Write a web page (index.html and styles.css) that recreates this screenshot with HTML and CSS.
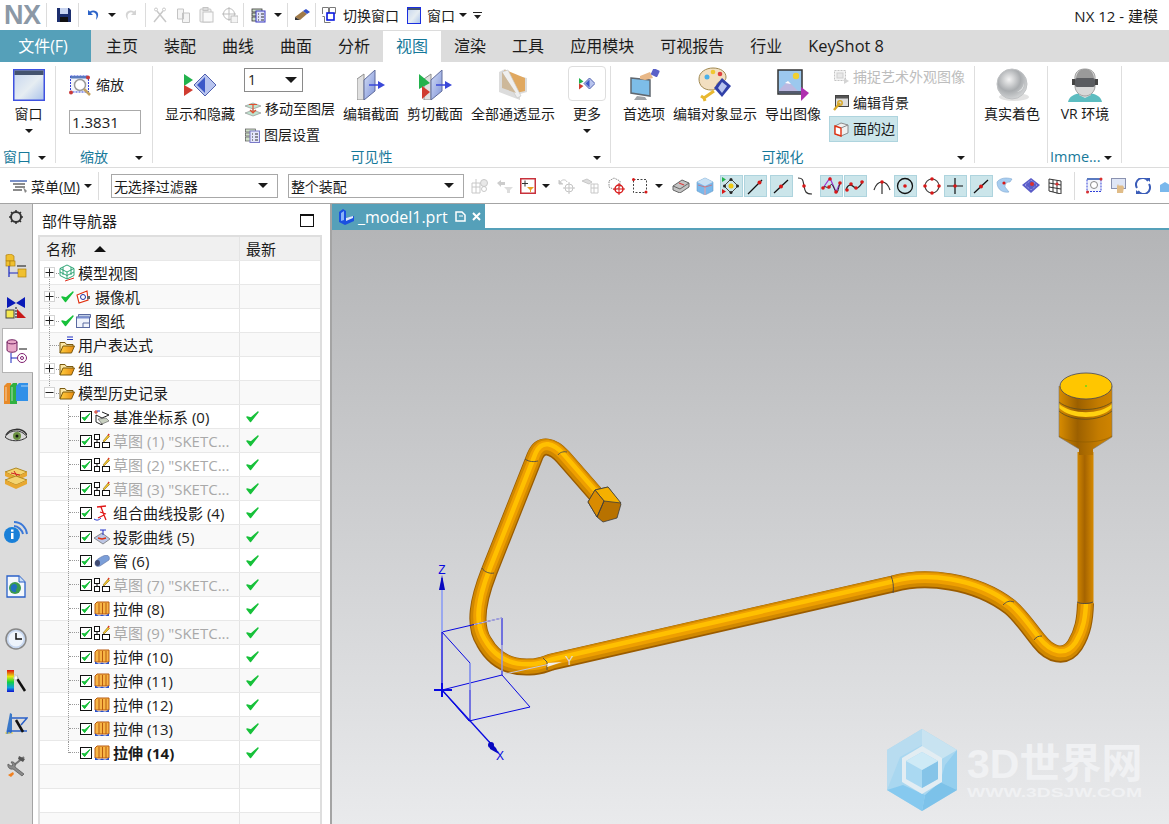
FILE: index.html
```html
<!DOCTYPE html>
<html lang="zh-CN">
<head>
<meta charset="utf-8">
<title>NX 12 - 建模</title>
<link rel="stylesheet" href="styles.css">
</head>
<body>
<svg class="defs" width="0" height="0">
  <defs>
    <linearGradient id="gWin" x1="0" y1="0" x2="1" y2="1"><stop offset="0" stop-color="#c4d4ee"/><stop offset=".55" stop-color="#e6edf2"/><stop offset="1" stop-color="#a9c2ea"/></linearGradient>
    <linearGradient id="gBlue" x1="0" y1="0" x2="1" y2="1"><stop offset="0" stop-color="#d4def6"/><stop offset="1" stop-color="#7f93d8"/></linearGradient>
    <linearGradient id="gOr" x1="0" y1="0" x2="1" y2="0"><stop offset="0" stop-color="#ffcf40"/><stop offset="1" stop-color="#e88a10"/></linearGradient>
    <radialGradient id="gBall" cx=".4" cy=".35" r=".7"><stop offset="0" stop-color="#f4f4f4"/><stop offset=".55" stop-color="#a9acaf"/><stop offset="1" stop-color="#d7d9da"/></radialGradient>
    <linearGradient id="gRain" x1="0" y1="0" x2="0" y2="1"><stop offset="0" stop-color="#e01010"/><stop offset=".3" stop-color="#e8e810"/><stop offset=".55" stop-color="#10d040"/><stop offset=".8" stop-color="#10a0e0"/><stop offset="1" stop-color="#1010d0"/></linearGradient>
    <symbol id="caret" viewBox="0 0 8 4"><polygon points="0,0 8,0 4,4" fill="#1a1a1a"/></symbol>
    <symbol id="chk" viewBox="0 0 13 13"><path d="M1 7l3.5 4.5L12 2 5 8z" fill="#17c13a" stroke="#17c13a" stroke-width="1.4" stroke-linejoin="round"/></symbol>
    <symbol id="cbx" viewBox="0 0 12 12"><rect x=".5" y=".5" width="11" height="11" fill="#fff" stroke="#111"/><path d="M2 6.5l2.6 3.2L10 2.5 4.8 6.8z" fill="#17c13a" stroke="#17c13a" stroke-linejoin="round"/></symbol>
    <symbol id="plus" viewBox="0 0 11 11"><rect x=".5" y=".5" width="10" height="10" fill="#fff" stroke="#d4d4d4"/><path d="M1.5 5.5h8M5.5 1.5v8" stroke="#222"/></symbol>
    <symbol id="minus" viewBox="0 0 11 11"><rect x=".5" y=".5" width="10" height="10" fill="#fff" stroke="#d4d4d4"/><path d="M1.5 5.5h8" stroke="#222"/></symbol>
    <symbol id="folder" viewBox="0 0 16 14"><path d="M1 13V2.5h5l1.5 2H14v2" fill="#fbe7a6" stroke="#7a5a10"/><path d="M1 13l3-7h11.5L12.5 13z" fill="url(#gOr)" stroke="#7a5a10"/></symbol>
    <symbol id="sketch" viewBox="0 0 16 16"><g fill="#fff" stroke="#111"><rect x=".5" y="1.500" width="5" height="5"/><rect x=".5" y="9.500" width="5" height="5"/><rect x="8.500" y="9.500" width="7" height="5"/></g><path d="M3 6.500v3" stroke="#111"/><path d="M9 8l5-6 1.500 1.500L10 9z" fill="#f2c52a" stroke="#8a6a10" stroke-width=".6"/><path d="M13.500 2l1-1.500 1.300 1.300-1 1z" fill="#e03020"/></symbol>
    <symbol id="extr" viewBox="0 0 16 16"><path d="M1 3l2-2h12v12H1z" fill="#f7b545" stroke="#b85a10"/><path d="M5 2v11M8.500 2v11M12 2v11" stroke="#b85a10"/><path d="M1 12.500C4 14.500 5 15.500 8 13.500 11 15.500 12 14.500 15 12.500V15H1z" fill="#2850c8"/></symbol>
    <symbol id="pt-line" viewBox="0 0 20 20"><path d="M3 18L17 4" stroke="#111" stroke-width="1.300"/><circle cx="14.500" cy="6.500" r="2" fill="#d81818"/></symbol>
    <symbol id="pt-mid" viewBox="0 0 20 20"><path d="M3 17L17 4" stroke="#111" stroke-width="1.300"/><circle cx="10" cy="10.500" r="2" fill="#d81818"/></symbol>
  </defs>
</svg>

<div class="app">
  <header class="titlebar">
    <span class="logo">NX</span>
    <i class="vsep"></i>
    <span class="slot w14 ml10"><svg width="14" height="14" viewBox="0 0 14 14"><path d="M0 0h12l2 2v12H0z" fill="#1c2f6e"/><rect x="3" y="0" width="8" height="6" fill="#c8d4f0"/><rect x="3" y="9" width="8" height="5" fill="#111"/></svg></span>
    <i class="vsep ml7"></i>
    <span class="slot w12 ml8"><svg width="12" height="12" viewBox="0 0 12 12"><path d="M1 1v5h5L4 4c2-1.500 5-.5 5.500 3L9 11c2.500-3 3-6.500.5-8.500C7.500 1 5 1 3 2.500z" fill="#2c63c8"/></svg></span>
    <span class="slot w8 ml9"><svg width="8" height="4"><use href="#caret"/></svg></span>
    <span class="slot w12 ml9"><svg width="12" height="12" viewBox="0 0 12 12"><path d="M11 1v5H6l2-2C6 2.500 3 3.500 2.500 7L3 11C.5 8 0 4.500 2.500 2.500 4.500 1 7 1 9 2.500z" fill="#d4d4d4"/></svg></span>
    <i class="vsep ml8"></i>
    <span class="slot w14 ml7"><svg width="14" height="16" viewBox="0 0 14 16"><path d="M1 15L10 4M13 15L4 4" stroke="#c8c8c8" stroke-width="1.500" fill="none"/><circle cx="11" cy="2.500" r="1.500" fill="none" stroke="#c8c8c8"/><circle cx="3" cy="2.500" r="1.500" fill="none" stroke="#c8c8c8"/></svg></span>
    <span class="slot w13 ml10"><svg width="13" height="15" viewBox="0 0 13 15"><path d="M.5 1h6v10h-6zM5.500 5h7v9.500h-7z" fill="#f4f4f4" stroke="#c4c4c4"/></svg></span>
    <span class="slot w15 ml9"><svg width="15" height="16" viewBox="0 0 15 16"><rect x="1" y="2" width="11" height="13" rx="1" fill="#f0f0f0" stroke="#c4c4c4"/><rect x="4" y="5" width="10" height="10" fill="#fafafa" stroke="#c4c4c4"/><rect x="4" y="0.500" width="5" height="3" fill="#ddd" stroke="#c4c4c4"/></svg></span>
    <span class="slot w16 ml8"><svg width="16" height="16" viewBox="0 0 16 16"><circle cx="7" cy="7" r="5.500" fill="none" stroke="#bdbdbd"/><path d="M7 0v14M0 7h14" stroke="#bdbdbd"/><rect x="9" y="9" width="7" height="7" fill="#f4f4f4" stroke="#bdbdbd"/></svg></span>
    <i class="vsep ml5"></i>
    <span class="slot w15 ml7"><svg width="15" height="16" viewBox="0 0 15 16"><g fill="#cfe0c8" stroke="#333" stroke-width=".8"><rect x="1" y="2" width="10" height="3"/><rect x="1" y="6" width="10" height="3"/><rect x="1" y="10" width="10" height="4"/></g><rect x="5" y="4" width="9" height="11" fill="#dfe2fa" stroke="#3a3ac0"/><path d="M7 7h1M7 10h1M7 13h1M10 7h3M10 10h3M10 13h3" stroke="#333"/></svg></span>
    <span class="slot w8 ml8"><svg width="8" height="4"><use href="#caret"/></svg></span>
    <i class="vsep ml5"></i>
    <span class="slot w16 ml6"><svg width="16" height="12" viewBox="0 0 16 12"><path d="M1 8L9 2l4 3-7 6z" fill="#a07a48"/><path d="M9 2l3-2 4 3-3 2z" fill="#3450c8"/><path d="M1 8l5 3H1z" fill="#333"/></svg></span>
    <i class="vsep ml5"></i>
    <span class="slot w14 ml6"><svg width="14" height="16" viewBox="0 0 14 16"><path d="M.5 7V.5h6v6M7.500.5h6v6h-6zM.5 9.500h2v6h6" fill="none" stroke="#7a7a7a"/><rect x="5" y="6" width="7" height="7" fill="#fff" stroke="#0a1ae0" stroke-width="1.600"/></svg></span>
    <span class="ttext ml7">切换窗口</span>
    <span class="slot w14 ml8"><svg width="14" height="17" viewBox="0 0 14 17"><rect x=".5" y=".5" width="13" height="16" fill="url(#gWin)" stroke="#1a2ee0"/><rect x="1" y="1" width="12" height="2" fill="#44536e"/></svg></span>
    <span class="ttext ml6">窗口</span>
    <span class="slot w8 ml4"><svg width="8" height="4"><use href="#caret"/></svg></span>
    <span class="slot w10 ml5"><svg width="9" height="7" viewBox="0 0 9 7"><path d="M0 .5h9" stroke="#222"/><polygon points="1,3 8,3 4.500,7" fill="#222"/></svg></span>
    <span class="apptitle">NX 12 - 建模</span>
  </header>

  <nav class="tabs">
    <span class="tab-file">文件(F)</span>
    <span class="tab">主页</span><span class="tab">装配</span><span class="tab">曲线</span><span class="tab">曲面</span><span class="tab">分析</span><span class="tab tab-on">视图</span><span class="tab">渲染</span><span class="tab">工具</span><span class="tab">应用模块</span><span class="tab">可视报告</span><span class="tab">行业</span><span class="tab tab-latin">KeyShot 8</span>
  </nav>

  <section class="ribbon">
    <div class="group g1">
      <div class="g-body">
        <div class="big wfull">
          <span class="big-ic"><svg width="32" height="32" viewBox="0 0 32 32"><rect x=".75" y=".75" width="30.500" height="30.500" fill="url(#gWin)" stroke="#3f52e0" stroke-width="1.500"/><rect x="1.500" y="1.500" width="29" height="4.500" fill="#44536e"/></svg></span>
          <span class="big-t">窗口</span>
          <svg class="big-c" width="8" height="4"><use href="#caret"/></svg>
        </div>
      </div>
      <div class="g-label left">窗口<svg class="g-c" width="8" height="4"><use href="#caret"/></svg></div>
    </div>
    <div class="group g2">
      <div class="g-body col">
        <div class="zoomrow">
          <svg width="23" height="21" viewBox="0 0 23 21"><rect x="1.500" y="1" width="18" height="16" fill="#f4f6fb" stroke="#3040d8" stroke-dasharray="2 1"/><rect x="1.500" y="1" width="18" height="2.500" fill="#5a7ac0"/><circle cx="11" cy="10" r="5.500" fill="#fff" stroke="#9a9a9a" stroke-width="1.500"/><path d="M15 14l6 6" stroke="#c2a060" stroke-width="2.500"/><circle cx="19" cy="2.500" r="2" fill="#c83a3a"/><circle cx="2" cy="17.500" r="2" fill="#c83a3a"/></svg>
          <span>缩放</span>
        </div>
        <div class="zoomval">1.3831</div>
      </div>
      <div class="g-label">缩放<svg class="g-c" width="8" height="4"><use href="#caret"/></svg></div>
    </div>
    <div class="group g3">
      <div class="g-body">
        <div class="big w70 ml12">
          <span class="big-ic"><svg width="32" height="22" viewBox="0 0 32 22"><polygon points="0,0 9,6 0,12" fill="#22b24c"/><polygon points="0,11 9,16 0,22" fill="#d03c30"/><polygon points="21,0 32,11 21,22 10,11" fill="#b8c4ee" stroke="#5060b0"/><polygon points="21,3 21,19 13,11" fill="#3c58c8"/></svg></span>
          <span class="big-t">显示和隐藏</span>
        </div>
        <div class="lcol ml9">
          <div class="combo c-layer"><span>1</span><svg width="12" height="6"><use href="#caret"/></svg></div>
          <div class="mini mt7"><svg width="16" height="15" viewBox="0 0 16 15"><path d="M0 4l8-3 8 3-8 3z" fill="#bfe3cf" stroke="#888" stroke-width=".6"/><path d="M0 11l8-3 8 3-8 3z" fill="#bfe3cf" stroke="#888" stroke-width=".6"/><path d="M4 2.500h8M8 3v8M5 8l3 3 3-3" stroke="#e05030" fill="none" stroke-width="1.200"/></svg><span>移动至图层</span></div>
          <div class="mini mt6"><svg width="15" height="16" viewBox="0 0 15 16"><g fill="#cfe0c8" stroke="#555" stroke-width=".7"><rect x="0.500" y="2" width="10" height="3"/><rect x="0.500" y="6" width="10" height="3"/><rect x="0.500" y="10" width="10" height="4"/></g><rect x="5" y="4" width="9.500" height="11.500" fill="#e4e6fa" stroke="#7a7ac8"/><path d="M7 7h1M7 10h1M7 13h1M10 7h3M10 10h3M10 13h3" stroke="#333"/></svg><span>图层设置</span></div>
        </div>
        <div class="big w56">
          <span class="big-ic"><svg width="28" height="30" viewBox="0 0 28 30"><polygon points="0,9 7,4 7,30 0,30" fill="#e0e0e0" stroke="#909090"/><polygon points="7,10 18,0 18,21 7,30" fill="url(#gBlue)" stroke="#606c9c"/><path d="M12 15h10" stroke="#3a48d8" stroke-width="1.500"/><polygon points="21,11 28,15 21,19" fill="#3a48d8"/></svg></span>
          <span class="big-t">编辑截面</span>
        </div>
        <div class="big w56 ml8">
          <span class="big-ic"><svg width="33" height="30" viewBox="0 0 33 30"><polygon points="5,9 12,4 12,30 5,30" fill="#e0e0e0" stroke="#909090"/><polygon points="12,10 23,0 23,21 12,30" fill="url(#gBlue)" stroke="#606c9c"/><path d="M17 15h10" stroke="#3a48d8" stroke-width="1.500"/><polygon points="26,11 33,15 26,19" fill="#3a48d8"/><polygon points="0,4 11,13 0,19" fill="#22b24c"/><polygon points="3,16 11,22 3,29" fill="#d03c30"/></svg></span>
          <span class="big-t">剪切截面</span>
        </div>
        <div class="big w84 ml8">
          <span class="big-ic"><svg width="28" height="31" viewBox="0 0 28 31"><polygon points="0,3 6,0 14,6 28,9 28,23 21,25 21,31 0,23" fill="#dcdcdc"/><polygon points="5,1 9,2 26,9 26,22 17,24" fill="#e0a860"/><polygon points="3,3 9,1 22,27 18,29" fill="#efefef" stroke="#c4c4c4" stroke-width=".6"/><polygon points="3,3 17,24 3,19" fill="#cdb89a"/></svg></span>
          <span class="big-t">全部通透显示</span>
        </div>
        <div class="big w38 ml13">
          <span class="more-box"><svg width="16" height="15" viewBox="0 0 32 26"><polygon points="0,2 9,9 0,14" fill="#22b24c"/><polygon points="0,13 9,18 0,25" fill="#d03c30"/><polygon points="21,2 32,13 21,24 10,13" fill="#b8c4ee" stroke="#5060b0" stroke-width="2"/><polygon points="21,5 21,21 13,13" fill="#3c58c8"/></svg></span>
          <span class="big-t">更多</span>
          <svg class="big-c" width="8" height="4"><use href="#caret"/></svg>
        </div>
      </div>
      <div class="g-label">可见性<svg class="g-c" width="8" height="4"><use href="#caret"/></svg></div>
    </div>
    <div class="group g4">
      <div class="g-body">
        <div class="big w42 ml12">
          <span class="big-ic"><svg width="31" height="32" viewBox="0 0 31 32"><path d="M2 9l19 2v16l-19-3z" fill="#7dbde8" stroke="#606870" stroke-width="1.500"/><path d="M8 27l8 1 2 3H5z" fill="#a0a4a8"/><path d="M11 7l10-4 3 6-8 2-5-1z" fill="#e8b888"/><rect x="23" y="0" width="7" height="7" rx="1" transform="rotate(25 26 3)" fill="#5a60c8"/></svg></span>
          <span class="big-t">首选项</span>
        </div>
        <div class="big w84 ml8">
          <span class="big-ic"><svg width="34" height="36" viewBox="0 0 34 36"><path d="M1 12C1 5 8 1 15 1c8 0 13 4 13 9 0 4-3 5-6 5-2 0-3 1-3 3 0 4-2 5-6 5C6 23 1 19 1 12z" fill="#f2dfc0" stroke="#a08850"/><circle cx="9" cy="10" r="2.500" fill="#4ab0e8"/><circle cx="15" cy="5" r="2.300" fill="#f0c830"/><circle cx="22" cy="7" r="2.300" fill="#e04040"/><polygon points="24,11 33,19 24,30 16,21" fill="#3040a8"/><polygon points="24,15 29,19 24,26 20,21" fill="#b8c4ee"/><path d="M16 24L6 31M6 31l-3-2M6 31l1 3" stroke="#e8b830" stroke-width="3" fill="none"/></svg></span>
          <span class="big-t">编辑对象显示</span>
        </div>
        <div class="big w56 ml8">
          <span class="big-ic"><svg width="32" height="32" viewBox="0 0 32 32"><rect x="1" y="1" width="24" height="24" fill="#9cc8ee" stroke="#333" stroke-width="1.500"/><circle cx="19" cy="7" r="3.200" fill="#f0d030"/><path d="M2 21l9-9 12 12H2z" fill="#bcb8e0"/><path d="M8 14l3-2 3 3z" fill="#fff"/><rect x="2" y="22" width="22" height="2" fill="#555a70"/><polygon points="24,18 32,24 24,32" fill="#b030b0"/></svg></span>
          <span class="big-t">导出图像</span>
        </div>
        <div class="lcol2 ml8">
          <div class="mini2 dim"><svg width="16" height="16" viewBox="0 0 16 16"><rect x="1.500" y="1.500" width="11" height="10" fill="#f4f4f4" stroke="#c4c4c4" stroke-dasharray="2 1"/><rect x="4" y="4" width="6" height="5" fill="#e8e8e8" stroke="#d0d0d0"/><polygon points="11,9 16,12 11,15" fill="#d4d4d4"/></svg><span>捕捉艺术外观图像</span></div>
          <div class="mini2 mt6"><svg width="16" height="16" viewBox="0 0 16 16"><rect x="2.500" y=".5" width="13" height="11" fill="#ddd" stroke="#444"/><rect x="3" y="1" width="12" height="2.500" fill="#555"/><path d="M1 15l6-7" stroke="#d8a828" stroke-width="2.400"/><circle cx="7" cy="8" r="2.200" fill="none" stroke="#d8a828" stroke-width="1.500"/></svg><span>编辑背景</span></div>
          <div class="mini2 hl"><svg width="15" height="15" viewBox="0 0 15 15"><path d="M1 4l6-3 7 2v8l-7 3-6-2z" fill="#f0f0f0" stroke="#8a8a8a"/><path d="M1 4l6 2v8l-6-2z" fill="#fff" stroke="#e03010" stroke-width="1.400"/><path d="M7 6l7-3" stroke="#8a8a8a"/></svg><span>面的边</span></div>
        </div>
      </div>
      <div class="g-label">可视化<svg class="g-c" width="8" height="4"><use href="#caret"/></svg></div>
    </div>
    <div class="group g5">
      <div class="g-body">
        <div class="big w56 ml9">
          <span class="big-ic"><svg width="35" height="34" viewBox="0 0 35 34"><ellipse cx="19" cy="29" rx="15" ry="4" fill="#e2e2e2"/><circle cx="17" cy="16" r="15" fill="url(#gBall)" stroke="#c0c2c4"/><path d="M22 24c5-1 7-5 7-9-1 5-3 7-7 9z" fill="#fff" opacity=".8"/></svg></span>
          <span class="big-t">真实着色</span>
        </div>
      </div>
      <div class="g-label"></div>
    </div>
    <div class="group g6">
      <div class="g-body">
        <div class="big w50 ml12">
          <span class="big-ic"><svg width="34" height="34" viewBox="0 0 34 34"><path d="M0 34c1-6 7-8 12-9h10c5 1 11 3 12 9z" fill="#5cbcc0"/><path d="M11 20h12v7l-6 3-6-3z" fill="#e0e0e0"/><path d="M7 12C6 4 11 1 17 1s11 3 10 11v6c0 6-5 10-10 10S7 24 7 18z" fill="#d8d8d8" stroke="#a0a0a0"/><path d="M8 10C9 3 13 1 17 1s8 2 9 9z" fill="#9a9a9a"/><rect x="7" y="10" width="20" height="9" rx="2" fill="#5a5c60"/><rect x="4" y="11" width="3" height="6" fill="#444"/><rect x="27" y="11" width="3" height="6" fill="#444"/></svg></span>
          <span class="big-t">VR 环境</span>
        </div>
      </div>
      <div class="g-label left2">Imme...<svg class="g-c" width="8" height="4"><use href="#caret"/></svg></div>
    </div>
  </section>

  <section class="toolbar">
    <svg class="ml10" width="18" height="14" viewBox="0 0 18 14"><path d="M0 1h17v2H0z" fill="#7a90c8"/><path d="M3 5h12M5 8h10M3 11h9" stroke="#666" stroke-width="1.500"/><path d="M13 8l4 4-2 2z" fill="#888"/></svg>
    <span class="menu ml3">菜单(<u>M</u>)</span>
    <svg class="ml4" width="8" height="4"><use href="#caret"/></svg>
    <i class="tsep ml6"></i>
    <div class="combo c-f1 ml12"><span>无选择过滤器</span><svg width="10" height="5"><use href="#caret"/></svg></div>
    <div class="combo c-f2 ml10"><span>整个装配</span><svg width="10" height="5"><use href="#caret"/></svg></div>
    <span class="ts ml4"><svg width="18" height="16" viewBox="0 0 18 16" fill="none" stroke="#c8c8c8"><path d="M1 5h8v10H1zM5 1v14M1 9h8"/><circle cx="13" cy="5" r="3.500" fill="#e8e8e8"/><circle cx="13" cy="11" r="2.500"/></svg></span>
    <span class="ts ml1"><svg width="18" height="16" viewBox="0 0 18 16"><path d="M1 5l4-3v2h4v3H5v2z" fill="#ccc"/><path d="M8 9h9l-3 3v3h-3v-3z" fill="#ddd"/></svg></span>
    <span class="ts w18 ml2"><svg width="16" height="16" viewBox="0 0 16 16"><rect x=".75" y=".75" width="14.500" height="14.500" fill="#fff" stroke="#c8323c" stroke-width="1.500"/><path d="M5 2.500v6M2 5.500h6" stroke="#333"/><polygon points="7,9 14,9 11,12 11,14 10,14 10,12" fill="#e8a020"/></svg></span>
    <span class="ts w10 ml4"><svg width="8" height="4"><use href="#caret"/></svg></span>
    <span class="ts ml4"><svg width="18" height="16" viewBox="0 0 18 16" fill="none" stroke="#c4c4c4"><path d="M2 5c1-4 6-4 7-1"/><path d="M1 2v4h4" fill="#ccc"/><circle cx="11" cy="10" r="4"/><path d="M11 4v12M5 10h12"/></svg></span>
    <span class="ts w20 ml1"><svg width="18" height="16" viewBox="0 0 18 16" fill="none" stroke="#c8c8c8"><path d="M1 3l5-2 5 3-3 2z" fill="#ddd"/><path d="M10 6h7v9h-7zM10 10h7M13 6v9"/></svg></span>
    <span class="ts ml4"><svg width="18" height="18" viewBox="0 0 18 18" fill="none"><path d="M2 4l5-3 6 3v6l-5 3-6-3z" stroke="#888" stroke-dasharray="1.500 1"/><circle cx="12" cy="12" r="4" stroke="#d81818" stroke-width="1.500"/><path d="M12 6v12M6 12h12" stroke="#d81818"/></svg></span>
    <span class="ts"><svg width="16" height="16" viewBox="0 0 16 16" fill="none"><rect x="1.500" y="1.500" width="13" height="13" stroke="#444" stroke-dasharray="2 1.500"/><circle cx="1.500" cy="1.500" r="1.500" fill="#d81818"/><circle cx="14" cy="14" r="1.500" fill="#d81818"/></svg></span>
    <span class="ts w10 ml2"><svg width="8" height="4"><use href="#caret"/></svg></span>
    <span class="ts ml5"><svg width="18" height="14" viewBox="0 0 18 14"><path d="M1 7l9-6 7 3v4l-9 6-7-3z" fill="#c4c4c4" stroke="#666"/><path d="M1 7l7 3 9-6" fill="none" stroke="#666"/><path d="M7 4l5 2" stroke="#d84040" stroke-width="1.200"/></svg></span>
    <span class="ts"><svg width="18" height="18" viewBox="0 0 18 18"><path d="M1 5l8-4 8 4v9l-8 4-8-4z" fill="#7ab8ec" stroke="#6a9ac8" stroke-width=".6"/><path d="M1 5l8 4 8-4-8-4z" fill="#c8e0f4"/><path d="M9 9v9" stroke="#f0a0a0"/><path d="M2 8l7 2 7-2" stroke="#e06060" fill="none" stroke-width=".7"/></svg></span>
    <span class="ts on w23 ml3"><svg width="18" height="18" viewBox="0 0 18 18" fill="none"><path d="M9 2l7 7-7 7-7-7z" stroke="#444"/><circle cx="9" cy="9" r="2.500" fill="#f0c810"/><circle cx="9" cy="2.500" r="1.500" fill="#222"/><circle cx="15.500" cy="9" r="1.500" fill="#222"/><circle cx="9" cy="15.500" r="1.500" fill="#222"/><circle cx="2.500" cy="9" r="1.500" fill="#222"/><polygon points="0,0 4,2.500 0,5" fill="#22b24c"/><polygon points="0,12 4,14.500 0,17" fill="#d81818"/></svg></span>
    <span class="ts on w23 ml1"><svg width="20" height="20"><use href="#pt-line"/></svg></span>
    <span class="ts on w23 ml3"><svg width="20" height="20"><use href="#pt-mid"/></svg></span>
    <span class="ts"><svg width="16" height="20" viewBox="0 0 16 20" fill="none"><path d="M1 2c5 0 5 2 6 8s2 8 8 8" stroke="#333" stroke-width="1.200"/><circle cx="7" cy="10" r="1.800" fill="#d81818"/></svg></span>
    <span class="ts on w23 ml3"><svg width="21" height="20" viewBox="0 0 21 20" fill="none"><path d="M2 12L9 2l6 14 4-9" stroke="#a030d0" stroke-width="1.200"/><path d="M2 12c3-4 5 3 7-2s4 3 6 6 3-7 4-9" stroke="#222"/><g fill="#d81818"><circle cx="2" cy="12" r="1.800"/><circle cx="9" cy="3" r="1.800"/><circle cx="15" cy="16" r="1.800"/><circle cx="19" cy="7" r="1.800"/><circle cx="8" cy="11" r="1.800"/></g></svg></span>
    <span class="ts on w23 ml1"><svg width="20" height="14" viewBox="0 0 20 14" fill="none"><path d="M1 11c2-7 6-5 8-3s5 2 9-6" stroke="#222" stroke-width="1.300"/><g fill="#d81818"><circle cx="2" cy="11" r="1.800"/><circle cx="6" cy="5" r="1.800"/><circle cx="11" cy="9" r="1.800"/><circle cx="17" cy="3" r="1.800"/></g></svg></span>
    <span class="ts ml3"><svg width="18" height="16" viewBox="0 0 18 16" fill="none"><path d="M1 12C3 6 6 4 9 4s6 2 8 8M9 4v12" stroke="#333" stroke-width="1.200"/><circle cx="9" cy="4" r="1.800" fill="#d81818"/></svg></span>
    <span class="ts on w23"><svg width="18" height="18" viewBox="0 0 18 18" fill="none"><circle cx="9" cy="9" r="7.500" stroke="#111" stroke-width="1.300"/><circle cx="9" cy="9" r="1.800" fill="#d81818"/></svg></span>
    <span class="ts ml3"><svg width="18" height="18" viewBox="0 0 18 18" fill="none"><circle cx="9" cy="9" r="7" stroke="#444" stroke-width="1.100"/><g fill="#d81818"><circle cx="9" cy="2" r="1.800"/><circle cx="16" cy="9" r="1.800"/><circle cx="9" cy="16" r="1.800"/><circle cx="2" cy="9" r="1.800"/></g></svg></span>
    <span class="ts on w23"><svg width="18" height="18" viewBox="0 0 18 18"><path d="M9 1v16M1 9h16" stroke="#111" stroke-width="1.200"/><circle cx="9" cy="9" r="1.800" fill="#d81818"/></svg></span>
    <span class="ts on w23 ml3"><svg width="20" height="20"><use href="#pt-mid"/></svg></span>
    <span class="ts"><svg width="17" height="17" viewBox="0 0 17 17"><path d="M1 5c3-4 9-5 15-3l-2 3c-4 0-5 2-5 5l4 5c-6 1-12-2-12-10z" fill="#a8cdf0" stroke="#80a8d0" stroke-width=".6"/><circle cx="8" cy="6" r="1.600" fill="#d81818"/></svg></span>
    <span class="ts ml2"><svg width="18" height="15" viewBox="0 0 18 15"><polygon points="0,7 9,0 18,7 9,15" fill="#5a5cc8"/><path d="M3 7l6-5 6 5-6 5z" fill="none" stroke="#b0b0f0" stroke-dasharray="1 1"/><circle cx="10" cy="6" r="2" fill="#d83030"/></svg></span>
    <span class="ts"><svg width="14" height="16" viewBox="0 0 14 16" fill="none" stroke="#333"><path d="M1 1l12 2v13L1 13zM5 2v12M9 2.500v13M1 5l12 2M1 9l12 2"/><circle cx="9" cy="6" r="1.600" fill="#d83030" stroke="none"/></svg></span>
    <i class="tsep ml7"></i>
    <span class="ts ml8"><svg width="17" height="17" viewBox="0 0 17 17"><rect x="1" y="1.500" width="14" height="13" fill="#f4f6fb" stroke="#3040d8" stroke-dasharray="2 1"/><rect x="1" y="1" width="14" height="2" fill="#5a7ac0"/><circle cx="8" cy="8" r="3.500" fill="#fff" stroke="#888"/><circle cx="15" cy="2" r="1.500" fill="#d83030"/><circle cx="1.500" cy="15" r="1.500" fill="#d83030"/></svg></span>
    <span class="ts"><svg width="16" height="15" viewBox="0 0 16 15"><rect x=".5" y=".5" width="14" height="10" fill="#dfe6f6" stroke="#8a92b0"/><path d="M6 15V8l1-2 1 2 1-1 1 1 1-1 2 2-1 6z" fill="#e0bc88"/></svg></span>
    <span class="ts"><svg width="16" height="16" viewBox="0 0 16 16" fill="none"><path d="M2 10A6.500 6.500 0 0 1 13 3" stroke="#3a5cb8" stroke-width="2"/><path d="M14 6A6.500 6.500 0 0 1 3 13" stroke="#3a5cb8" stroke-width="2"/><path d="M11 0h4v4z" fill="#3a5cb8"/><path d="M5 16H1v-4z" fill="#3a5cb8"/></svg></span>
    <span class="ts"><svg width="16" height="14" viewBox="0 0 16 14"><path d="M1 6l5-3 5 3v7H1z" fill="#7ab8ec"/></svg></span>
  </section>

  <main class="work">
    <aside class="rail">
      <span class="rs h26"><svg width="16" height="16" viewBox="0 0 16 16" fill="none"><circle cx="8" cy="8" r="5" stroke="#333" stroke-width="2"/><path d="M8 1v2M8 13v2M1 8h2M13 8h2M3 3l1.500 1.500M11.500 11.500L13 13M13 3l-1.500 1.500M3 13l1.500-1.500" stroke="#333" stroke-width="1.500"/></svg></span>
      <span class="rs mt18"><svg width="24" height="24" viewBox="0 0 24 24"><g fill="#f0c030" stroke="#b08010" stroke-width=".7"><path d="M2 1l5-1 3 2v5H2z"/><rect x="2" y="7" width="4" height="5"/><rect x="6" y="7" width="5" height="5"/><rect x="14" y="15" width="8" height="8"/></g><path d="M5 12v11M5 19h9" stroke="#1a28c0" stroke-width="1.200"/><path d="M13 12h9" stroke="#111"/></svg></span>
      <span class="rs mt6"><svg width="22" height="22" viewBox="0 0 22 22"><polygon points="2,0 11,6 20,0 20,11 11,6 2,11" fill="#0a1ab8"/><rect x="1" y="13" width="8" height="8" fill="#f4e850" stroke="#444"/><polygon points="12,12 21,21 12,21" fill="#c81818"/><path d="M11 10v12" stroke="#111" stroke-dasharray="2 1"/></svg></span>
      <span class="rs ract mt2"><svg width="22" height="24" viewBox="0 0 22 24" fill="none"><path d="M1 3c0-3 10-3 10 0v8c0 3-10 3-10 0z" fill="#e8a8c8" stroke="#702060"/><path d="M1 3c0 2.500 10 2.500 10 0" stroke="#702060"/><path d="M13 10h8" stroke="#111"/><path d="M5 14v10M5 19h6" stroke="#1a28c0"/><circle cx="16" cy="19" r="4.500" stroke="#802070"/><circle cx="16" cy="19" r="1.500" stroke="#802070"/></svg></span>
      <span class="rs mt2"><svg width="24" height="22" viewBox="0 0 24 22"><path d="M0 4l3-3h4v21H0z" fill="#e88a28"/><path d="M6 4l3-3h4v21H6z" fill="#30b040"/><path d="M12 4l3-3h9v18H12z" fill="#3090e8"/><path d="M17 4h7M2 5v14M8 5v14" stroke="#fff" stroke-width=".6"/></svg></span>
      <span class="rs mt6"><svg width="22" height="14" viewBox="0 0 22 14"><path d="M0 9C4 2 16 0 22 9c-6 5-17 5-22 0z" fill="#d8d8d8" stroke="#333"/><circle cx="12" cy="8" r="4" fill="#6a9040"/><circle cx="12" cy="8" r="1.500" fill="#111"/><path d="M1 7C5 0 17-1 22 7" stroke="#333" stroke-width="1.500" fill="none"/></svg></span>
      <span class="rs mt7"><svg width="22" height="22" viewBox="0 0 22 22"><path d="M0 5l11-4 11 4-11 5z" fill="#f4d470" stroke="#b08820"/><path d="M0 5v4l11 5 11-5V5l-11 5z" fill="#e8a830"/><path d="M0 13l11-4 11 4-11 5z" fill="#f4d470" stroke="#b08820"/><path d="M0 13v4l11 5 11-5v-4l-11 5z" fill="#e8a830"/><path d="M6 6l9 2M9 4l3 5" stroke="#d02020"/></svg></span>
      <span class="rs mt18"><svg width="24" height="24" viewBox="0 0 24 24" fill="none"><path d="M10 2c7 0 12 5 13 12M10 6c4 0 8 4 9 8" stroke="#3a78d8" stroke-width="2"/><circle cx="8" cy="15" r="8" fill="#1a80d8"/><rect x="7" y="13" width="2.500" height="6" fill="#fff"/><rect x="7" y="9.500" width="2.500" height="2.200" fill="#fff"/></svg></span>
      <span class="rs mt18"><svg width="20" height="23" viewBox="0 0 20 23"><path d="M1 1h12l6 6v15H1z" fill="#f4f8fc" stroke="#2a60c8" stroke-width="1.300"/><path d="M13 1v6h6" fill="#c8dcf4" stroke="#2a60c8"/><circle cx="9" cy="13" r="6" fill="#3a9a50"/><path d="M5 11c3-3 5-2 6 0s-2 3-1 6c-4 0-6-2-5-6z" fill="#2070c0"/></svg></span>
      <span class="rs mt17"><svg width="22" height="22" viewBox="0 0 22 22" fill="none"><circle cx="11" cy="11" r="10" fill="#c8d8f0" stroke="#888" stroke-width="1.500"/><circle cx="11" cy="11" r="7.500" fill="#eef4fc"/><path d="M11 5v6h6" stroke="#111" stroke-width="1.500"/></svg></span>
      <span class="rs mt6"><svg width="22" height="24" viewBox="0 0 22 24"><rect x="2" y="1" width="7" height="22" fill="url(#gRain)"/><path d="M11 8l9 14" stroke="#111" stroke-width="2.500"/><path d="M10 5l1 2 2-1-1 2 2 1-2 1-1 2-1-2-2-1 2-1z" fill="#fff" stroke="#bbb" stroke-width=".5"/></svg></span>
      <span class="rs mt6"><svg width="24" height="22" viewBox="0 0 24 22" fill="none"><path d="M2 22l4-21 2 1v19" fill="#3a78c8"/><path d="M3 19h20M8 6h15l-6 7" stroke="#2a60c8" stroke-width="1.500"/><path d="M12 8l7 12" stroke="#111" stroke-width="2.500"/><path d="M1 21h9" stroke="#e8d040" stroke-dasharray="2 1"/></svg></span>
      <span class="rs mt7"><svg width="20" height="22" viewBox="0 0 20 22" fill="none"><path d="M18 2L7 11" stroke="#777" stroke-width="2"/><path d="M13 1l6 3-2 3-5-3z" fill="#555"/><path d="M5 7c3-1 5 2 4 5l9 7-2 2-9-7c-3 1-6-2-5-5l3 2 2-1z" fill="#8a8a8a" stroke="#444" stroke-width=".6"/><path d="M2 20l5-3 1 2-3 3z" fill="#f08020"/></svg></span>
    </aside>

    <section class="panel">
      <div class="p-title"><span>部件导航器</span><i class="p-max"></i></div>
      <div class="table">
        <div class="row head"><span class="c1 hc1">名称<svg width="12" height="6" viewBox="0 0 12 6"><polygon points="0,6 12,6 6,0" fill="#111"/></svg></span><span class="c2">最新</span></div>
        <div class="row top"><span class="c1"><svg width="11" height="11"><use href="#plus"/></svg><svg class="ml4" width="16" height="18" viewBox="0 0 16 18" fill="none"><path d="M8 1l7 3.500v7L8 15l-7-3.500v-7zM1 4.500L8 8l7-3.500M8 8v7M4 3v8M12 3v8M1 8l7 3.500L15 8" stroke="#1c9c6a" stroke-width=".9"/><path d="M6 17l9-3" stroke="#e03020"/></svg><b class="t ml3">模型视图</b></span><span class="c2"></span></div>
        <div class="row top alt"><span class="c1"><svg width="11" height="11"><use href="#plus"/></svg><svg class="ml6" width="13" height="13"><use href="#chk"/></svg><svg class="ml2" width="15" height="14" viewBox="0 0 15 14" fill="none"><path d="M1 5l10-4 1 9-9 3z" stroke="#e03010" stroke-width="1.100" fill="#fff"/><circle cx="7" cy="7" r="2.500" stroke="#2030a0"/><path d="M11 6h3v3h-3z" fill="#666"/></svg><b class="t ml4">摄像机</b></span><span class="c2"></span></div>
        <div class="row top"><span class="c1"><svg width="11" height="11"><use href="#plus"/></svg><svg class="ml6" width="13" height="13"><use href="#chk"/></svg><svg class="ml2" width="15" height="14" viewBox="0 0 15 14"><path d="M2.500.5h12v3h-12z" fill="#c0cfe8" stroke="#5a6aa0"/><rect x=".5" y="3" width="13" height="10.500" fill="#f0f4fc" stroke="#5a6aa0"/><path d="M1 3.500h12" stroke="#7a8fd0" stroke-width="2"/><path d="M7 13V9h6" stroke="#5a6aa0" fill="none"/></svg><b class="t ml4">图纸</b></span><span class="c2"></span></div>
        <div class="row top alt"><span class="c1"><svg class="ml15" width="16" height="18" viewBox="0 0 16 18"><path d="M8 1h6M8 3.500h6" stroke="#2030c0"/><use href="#folder" y="4" width="16" height="14"/></svg><b class="t ml3">用户表达式</b></span><span class="c2"></span></div>
        <div class="row top"><span class="c1"><svg width="11" height="11"><use href="#plus"/></svg><svg class="ml4" width="16" height="14"><use href="#folder"/></svg><b class="t ml3">组</b></span><span class="c2"></span></div>
        <div class="row top alt end"><span class="c1"><svg width="11" height="11"><use href="#minus"/></svg><svg class="ml4" width="16" height="14"><use href="#folder"/></svg><b class="t ml3">模型历史记录</b></span><span class="c2"></span></div>
        <div class="row kid"><span class="c1"><svg width="12" height="12"><use href="#cbx"/></svg><svg class="ml2" width="16" height="16" viewBox="0 0 16 16" fill="none"><path d="M2 1v4M0 3h4" stroke="#d03020"/><path d="M2 6l6 3 7-3M2 6v7l6 3V9M15 6l-7-3" stroke="#222"/><path d="M3 2h3" stroke="#2030c0"/><path d="M4 10l8-1 3 3-7 3z" fill="#c8d0c0" stroke="#555" stroke-width=".6"/></svg><b class="t ml3">基准坐标系 (0)</b></span><span class="c2"><svg width="13" height="13"><use href="#chk"/></svg></span></div>
        <div class="row kid alt dimrow"><span class="c1"><svg width="12" height="12"><use href="#cbx"/></svg><svg class="ml2" width="16" height="16"><use href="#sketch"/></svg><b class="t ml3">草图 (1) "SKETC...</b></span><span class="c2"><svg width="13" height="13"><use href="#chk"/></svg></span></div>
        <div class="row kid dimrow"><span class="c1"><svg width="12" height="12"><use href="#cbx"/></svg><svg class="ml2" width="16" height="16"><use href="#sketch"/></svg><b class="t ml3">草图 (2) "SKETC...</b></span><span class="c2"><svg width="13" height="13"><use href="#chk"/></svg></span></div>
        <div class="row kid alt dimrow"><span class="c1"><svg width="12" height="12"><use href="#cbx"/></svg><svg class="ml2" width="16" height="16"><use href="#sketch"/></svg><b class="t ml3">草图 (3) "SKETC...</b></span><span class="c2"><svg width="13" height="13"><use href="#chk"/></svg></span></div>
        <div class="row kid"><span class="c1"><svg width="12" height="12"><use href="#cbx"/></svg><svg class="ml2" width="16" height="16" viewBox="0 0 16 16" fill="none"><path d="M3 2l9-1M7 2l3 8-6 3M6 7l6 2M10 10l2 5" stroke="#e01818" stroke-width="1.300"/><path d="M0 14c3 2 5 1 7-1" stroke="#2030c8"/></svg><b class="t ml3">组合曲线投影 (4)</b></span><span class="c2"><svg width="13" height="13"><use href="#chk"/></svg></span></div>
        <div class="row kid alt"><span class="c1"><svg width="12" height="12"><use href="#cbx"/></svg><svg class="ml2" width="16" height="16" viewBox="0 0 16 16" fill="none"><path d="M0 9l8-5 8 6-7 5z" fill="#bcc6e4" stroke="#666" stroke-width=".7"/><path d="M6 1h6M9 1v5" stroke="#2030c8"/><path d="M4 9l4 1 4-1" stroke="#e03010" stroke-width="1.300"/></svg><b class="t ml3">投影曲线 (5)</b></span><span class="c2"><svg width="13" height="13"><use href="#chk"/></svg></span></div>
        <div class="row kid"><span class="c1"><svg width="12" height="12"><use href="#cbx"/></svg><svg class="ml2" width="16" height="12" viewBox="0 0 16 12"><path d="M1 8c0-3 7-7 11-8 3 0 4 3 3 5l-9 6C3 12 1 11 1 8z" fill="#7a9ed8" stroke="#6070a0" stroke-width=".6"/><ellipse cx="3.500" cy="8" rx="2.500" ry="3" fill="#404a70"/></svg><b class="t ml3">管 (6)</b></span><span class="c2"><svg width="13" height="13"><use href="#chk"/></svg></span></div>
        <div class="row kid alt dimrow"><span class="c1"><svg width="12" height="12"><use href="#cbx"/></svg><svg class="ml2" width="16" height="16"><use href="#sketch"/></svg><b class="t ml3">草图 (7) "SKETC...</b></span><span class="c2"><svg width="13" height="13"><use href="#chk"/></svg></span></div>
        <div class="row kid"><span class="c1"><svg width="12" height="12"><use href="#cbx"/></svg><svg class="ml2" width="16" height="16"><use href="#extr"/></svg><b class="t ml3">拉伸 (8)</b></span><span class="c2"><svg width="13" height="13"><use href="#chk"/></svg></span></div>
        <div class="row kid alt dimrow"><span class="c1"><svg width="12" height="12"><use href="#cbx"/></svg><svg class="ml2" width="16" height="16"><use href="#sketch"/></svg><b class="t ml3">草图 (9) "SKETC...</b></span><span class="c2"><svg width="13" height="13"><use href="#chk"/></svg></span></div>
        <div class="row kid"><span class="c1"><svg width="12" height="12"><use href="#cbx"/></svg><svg class="ml2" width="16" height="16"><use href="#extr"/></svg><b class="t ml3">拉伸 (10)</b></span><span class="c2"><svg width="13" height="13"><use href="#chk"/></svg></span></div>
        <div class="row kid alt"><span class="c1"><svg width="12" height="12"><use href="#cbx"/></svg><svg class="ml2" width="16" height="16"><use href="#extr"/></svg><b class="t ml3">拉伸 (11)</b></span><span class="c2"><svg width="13" height="13"><use href="#chk"/></svg></span></div>
        <div class="row kid"><span class="c1"><svg width="12" height="12"><use href="#cbx"/></svg><svg class="ml2" width="16" height="16"><use href="#extr"/></svg><b class="t ml3">拉伸 (12)</b></span><span class="c2"><svg width="13" height="13"><use href="#chk"/></svg></span></div>
        <div class="row kid alt"><span class="c1"><svg width="12" height="12"><use href="#cbx"/></svg><svg class="ml2" width="16" height="16"><use href="#extr"/></svg><b class="t ml3">拉伸 (13)</b></span><span class="c2"><svg width="13" height="13"><use href="#chk"/></svg></span></div>
        <div class="row kid last"><span class="c1"><svg width="12" height="12"><use href="#cbx"/></svg><svg class="ml2" width="16" height="16"><use href="#extr"/></svg><b class="t ml3 bold">拉伸 (14)</b></span><span class="c2"><svg width="13" height="13"><use href="#chk"/></svg></span></div>
        <div class="row alt"><span class="c1"></span><span class="c2"></span></div>
        <div class="row"><span class="c1"></span><span class="c2"></span></div>
        <div class="row alt"><span class="c1"></span><span class="c2"></span></div>
      </div>
    </section>

    <section class="view">
      <div class="doc-tabs">
        <div class="doc-tab">
          <svg width="16" height="16" viewBox="0 0 16 16"><path d="M1 3l4-3 3 2v7l8-2v5l-9 4-6-3z" fill="#1a50e0"/><path d="M3 4l3-2v9l-3 1z" fill="#8ab4f8"/><path d="M8 9l7-2v2l-7 3z" fill="#dfe8fb"/></svg>
          <span class="doc-name">_model1.prt</span>
          <svg class="doc-ic" width="11" height="11" viewBox="0 0 11 11" fill="none"><path d="M1 1h6l3 3v6H1z" stroke="#fff" stroke-width="1.500"/><path d="M4 5h4" stroke="#fff"/></svg>
          <svg class="doc-x" width="9" height="9" viewBox="0 0 9 9"><path d="M1 1l7 7M8 1L1 8" stroke="#fff" stroke-width="2"/></svg>
        </div>
      </div>
      <div class="canvas">
        <svg class="scene" width="837" height="594" viewBox="332 230 837 594">
          <defs>
            <linearGradient id="vert" x1="0" y1="0" x2="1" y2="0"><stop offset="0" stop-color="#cf8500"/><stop offset=".45" stop-color="#a66400"/><stop offset="1" stop-color="#d68a00"/></linearGradient>
            <linearGradient id="cyl" x1="0" y1="0" x2="1" y2="0"><stop offset="0" stop-color="#d88c00"/><stop offset=".35" stop-color="#9c6000"/><stop offset=".75" stop-color="#c47c00"/><stop offset="1" stop-color="#cf8400"/></linearGradient>
            <path id="tube" d="M598 497 L563 457 C553 446 541 442 535 456 L489 572 C478 600 473 625 484 642 C494 660 510 668 530 667 C540 667 545 664 552 662 L893 584 C925 575 975 580 1010 607 C1020 615 1030 630 1039 641 C1050 655 1065 660 1075 645 C1083 632 1085 620 1085.500 603"/>
          </defs>
          <g fill="none" stroke-linecap="butt">
            <use href="#tube" stroke="#9a5c00" stroke-width="17"/>
            <use href="#tube" stroke="#d08800" stroke-width="15" transform="translate(0 -.7)"/>
            <use href="#tube" stroke="#ee9f00" stroke-width="10" transform="translate(.4 -1.800)"/>
            <use href="#tube" stroke="#ffc000" stroke-width="4.500" transform="translate(.6 -2.800)"/>
          </g>
          <rect x="1077.500" y="452" width="16" height="152" fill="url(#vert)"/>
          <g fill="none" stroke="#4a4a4a" stroke-width=".9">
            <path d="M525 459c4 3 9 3 13 2"/><path d="M558 455c1-2 5-4 9-3"/><path d="M482 568c2 4 8 6 12 5"/><path d="M543 658l4 4 0 8"/><path d="M891 576c2 4 3 11 2 17"/><path d="M1003 605c3-3 6-5 11-3"/><path d="M1034 640c2-3 4-4 8-4"/><path d="M1077 602c4 2 11 2 16 0"/>
          </g>
          <!-- nut -->
          <g stroke="#3c3c3c" stroke-width=".8" stroke-linejoin="round">
            <polygon points="595,490 608,487 621,504 617,518 603,522 597,517 588,502" fill="#b87200"/>
            <polygon points="595,490 608,487 621,503 604,501" fill="#f4b000"/>
            <polygon points="595,490 604,501 597,517 588,502" fill="#d98b00"/>
            <path d="M604 501L597 517" fill="none"/>
          </g>
          <!-- canister -->
          <path d="M1059 386V437L1079 449V455H1093V449L1112 437V386z" fill="url(#cyl)"/>
          <path d="M1059 404C1072 415 1100 415 1112 404V408C1100 420 1072 420 1059 408z" fill="#ffd010"/>
          <path d="M1059 402c12 10 40 10 53 0M1059 411c12 11 40 11 53 0" fill="none" stroke="#5a4a20" stroke-width=".8"/>
          <ellipse cx="1086" cy="386" rx="26" ry="13" fill="#ffc600" stroke="#444458" stroke-width=".8"/>
          <path d="M1059 386V437L1079 449M1112 386V437L1093 449" fill="none" stroke="#777" stroke-width=".6"/>
          <path d="M1059 436c10 8 42 8 53 0" fill="none" stroke="#8a5a00" stroke-width=".6"/>
          <rect x="1085" y="385.500" width="2" height="1" fill="#20e020"/>
          <!-- triad -->
          <g fill="none" stroke="#0808e0" stroke-width="1">
            <path d="M442 632L502 618V675M442 690L502 675L530 707L469 721L442 690M442 632L470 663V721"/>
            <path d="M442 578V690" stroke-width="1.300"/>
            <path d="M442 690L492 745" stroke-width="1.300"/>
            <path d="M434 690H452M442 683V697" stroke-width="2"/>
          </g>
          <path d="M442 590V632" stroke="#9aa8ee" stroke-width="2"/>
          <path d="M470 663V690" stroke="#9aa8ee" stroke-width="1.500"/>
          <path d="M502 645V671" stroke="#dcdcdc" stroke-width="1"/>
          <path d="M474 624.500L502 618M505 674L550 664" stroke="#c8c8d8" stroke-width="1"/>
          <polygon points="442,575 445,590 439,590" fill="#0808c0"/>
          <polygon points="489,741 496,748 499,754 490,749" fill="#0808c0"/>
          <circle cx="491" cy="745" r="3" fill="#0808c0"/>
          <polygon points="547,667 562,662 548,663" fill="#f0f0f0"/>
          <text class="ax" x="442" y="574">Z</text>
          <text class="ax" x="500" y="760">X</text>
          <text class="ax axy" x="565" y="665">Y</text>
          <!-- watermark -->
          <g opacity=".92">
            <polygon points="922,729 957,750 957,790 922,811 887,790 887,750" fill="#a4d6f1"/>
            <polygon points="922,729 957,750 940,760 922,752" fill="#c6e4f3"/>
            <polygon points="887,750 922,729 922,745 900,757 893,775 887,790" fill="#b5dcf1"/>
            <polygon points="957,750 957,790 940,782 945,765" fill="#8dcdef"/>
            <polygon points="957,790 922,811 925,795 940,782" fill="#74bfea"/>
            <polygon points="922,811 887,790 903,785 925,795" fill="#7ec7f0"/>
            <polygon points="922,746 942,758 942,782 922,794 902,782 902,758" fill="#e3eef4"/>
            <polygon points="922,752 938,761 938,779 922,788 906,779 906,761" fill="#a6d8f3"/>
            <polygon points="922,770 938,761 938,779 922,788" fill="#7ec2e9"/>
            <polygon points="922,752 938,761 922,770 906,761" fill="#cdebf8"/>
          </g>
          <text class="wm1" x="967" y="778">3D世界网</text>
          <text class="wm2" x="967" y="797" textLength="175" lengthAdjust="spacingAndGlyphs">WWW.3DSJW.COM</text>
        </svg>
      </div>
    </section>
  </main>
</div>
</body>
</html>
```

FILE: styles.css
```css
* { box-sizing: border-box; }
html, body { margin: 0; padding: 0; height: 100%; overflow: hidden; }
body {
  font-family: "Open Sans", "Noto Sans CJK SC", sans-serif;
  font-size: 14px;
  color: #1b1b1b;
  background: #fff;
}
svg { display: block; flex: none; }
.defs { position: absolute; }
.app { width: 1169px; height: 824px; display: flex; flex-direction: column; overflow: hidden; }

.ml1 { margin-left: 1px; } .ml2 { margin-left: 2px; } .ml3 { margin-left: 3px; } .ml4 { margin-left: 4px; }
.ml5 { margin-left: 5px; } .ml6 { margin-left: 6px; } .ml7 { margin-left: 7px; } .ml8 { margin-left: 8px; }
.ml9 { margin-left: 9px; } .ml10 { margin-left: 10px; } .ml12 { margin-left: 12px; } .ml13 { margin-left: 13px; }
.ml15 { margin-left: 15px; }
.mt2 { margin-top: 2px; } .mt6 { margin-top: 6px; } .mt7 { margin-top: 7px; }
.mt17 { margin-top: 17px; } .mt18 { margin-top: 18px; }

/* title bar */
.titlebar { height: 30px; display: flex; align-items: center; flex: none; }
.logo { width: 46px; padding-left: 4px; font: bold 27px/30px "Liberation Sans", sans-serif; color: #8b98a6; letter-spacing: -.5px; }
.vsep { width: 1px; height: 24px; background: #dcdcdc; flex: none; }
.slot { display: flex; justify-content: center; align-items: center; flex: none; }
.w8 { width: 8px; } .w10 { width: 10px; } .w12 { width: 12px; } .w13 { width: 13px; } .w14 { width: 14px; }
.w15 { width: 15px; } .w16 { width: 16px; }
.ttext { flex: none; }
.apptitle { margin-left: auto; padding-right: 11px; font-size: 15px; }

/* tabs */
.tabs { height: 32px; background: #dcdcdc; display: flex; flex: none; font-size: 16px; line-height: 32px; }
.tab-file { width: 91px; margin-right: 2px; padding-right: 5px; background: #55a0b9; color: #fff; text-align: center; }
.tab { padding: 0 13px; }
.tab-latin { font-size: 16.400px; }
.tab-on { background: #fff; color: #17799a; margin-top: 1px; line-height: 30px; height: 31px; }

/* ribbon */
.ribbon { height: 105px; padding: 4px 0; display: flex; flex: none; background: #fff; line-height: 20px; }
.group { height: 97px; border-right: 1px solid #dedede; display: flex; flex-direction: column; flex: none; position: relative; }
.g1 { width: 56px; } .g2 { width: 97px; } .g3 { width: 458px; } .g4 { width: 364px; } .g5 { width: 73px; } .g6 { width: 74px; }
.g-body { height: 80px; display: flex; }
.g-body.col { flex-direction: column; }
.g-label { height: 17px; line-height: 22px; color: #17799a; text-align: center; padding-right: 20px; }
.g-label.left { text-align: left; padding-left: 3px; }
.g-label.left2 { text-align: left; padding-left: 2px; font-size: 14.500px; }
.g-c { position: absolute; right: 9px; bottom: 3px; }
.big { display: flex; flex-direction: column; align-items: center; flex: none; }
.big-ic { height: 38px; display: flex; align-items: center; padding-bottom: 1px; }
.big-t { white-space: nowrap; }
.big-c { margin-top: 5px; }
.wfull { width: 55px; padding-left: 2px; }
.w70 { width: 70px; } .w56 { width: 56px; } .w84 { width: 84px; } .w38 { width: 38px; } .w42 { width: 42px; } .w50 { width: 50px; }
.more-box { width: 38px; height: 35px; border: 1px solid #dedede; border-radius: 4px; display: flex; justify-content: center; align-items: center; margin-bottom: 3px; }

.zoomrow { display: flex; align-items: center; gap: 4px; margin: 8px 0 0 13px; height: 22px; }
.zoomval { width: 72px; height: 24px; margin: 14px 0 0 13px; border: 1px solid #aaa; font-size: 15px; line-height: 22px; padding-left: 2px; }
.combo { border: 1px solid #a8a8a8; display: flex; align-items: center; justify-content: space-between; background: #fff; flex: none; }
.c-layer { width: 59px; height: 24px; margin-top: 2px; padding: 0 5px 0 3px; font-size: 14px; border-color: #8a8a8a; }
.c-f1 { width: 167px; height: 24px; padding: 0 9px 0 2px; }
.c-f2 { width: 176px; height: 24px; padding: 0 9px 0 2px; }
.lcol { width: 99px; flex: none; display: flex; flex-direction: column; }
.mini { display: flex; align-items: center; gap: 4px; height: 20px; margin-left: 1px; white-space: nowrap; }
.lcol2 { display: flex; flex-direction: column; flex: none; padding-top: 1px; }
.mini2 { display: flex; align-items: center; gap: 4px; height: 20px; padding-left: 4px; white-space: nowrap; }
.mini2.dim { color: #bdbdbd; }
.hl { width: 69px; height: 26px; margin-top: 3px; background: #cbe5ea; border: 1px solid #aed4de; padding-left: 4px; }

/* toolbar */
.toolbar { height: 37px; border-top: 1px solid #dcdcdc; border-bottom: 1px solid #a4a4a4; display: flex; align-items: center; flex: none; }
.menu { white-space: nowrap; }
.tsep { width: 1px; height: 28px; background: #dcdcdc; flex: none; }
.ts { width: 24px; height: 22px; display: flex; align-items: center; justify-content: center; flex: none; }
.ts.w10 { width: 10px; } .ts.w18 { width: 18px; } .ts.w20 { width: 20px; } .ts.w23 { width: 23px; }
.ts.on { background: #cbe5ea; border: 1px solid #aed4de; }

/* work area */
.work { flex: 1; display: flex; min-height: 0; }
.rail { width: 33px; background: #dcdcdc; border-right: 1px solid #a4a4a4; display: flex; flex-direction: column; flex: none; }
.rs { height: 36px; display: flex; align-items: center; justify-content: center; flex: none; padding-right: 1px; }
.h26 { height: 26px; }
.ract { height: 45px; width: 31px; margin-left: 2px; background: #fff; border: 1px solid #b4b4b4; border-right: 0; padding: 0 2px 0 0; }

.panel { width: 299px; border-right: 2px solid #a4a4a4; padding-left: 5px; flex: none; display: flex; flex-direction: column; font-size: 15px; }
.p-title { height: 31px; flex: none; display: flex; align-items: center; justify-content: space-between; padding: 2px 16px 0 4px; }
.p-max { width: 14px; height: 13px; border: 1px solid #111; border-top-width: 2px; }
.table { width: 284px; flex: 1; min-height: 0; overflow: hidden; border: 2px solid #dedede; border-bottom: 0; }
.row { height: 24px; display: grid; grid-template-columns: 200px 1fr; border-bottom: 1px solid #e8e8e8; position: relative; }
.row.alt { background: #f9f9f9; }
.head { background: #f0f0f0; height: 24px; }
.hc1 { padding-left: 6px; gap: 18px; }
.c1 { display: flex; align-items: center; border-right: 1px solid #e4e4e4; white-space: nowrap; padding-left: 4px; min-width: 0; position: relative; z-index: 1; }
.head .c1 { padding-left: 6px; }
.head .c2 { padding-left: 6px; }
.c2 { display: flex; align-items: center; padding-left: 6px; }
.t { font-weight: 400; }
.t.bold { font-weight: 700; }
.kid .c1 { padding-left: 40px; }
.dimrow .t { color: #a9a9a9; }
.top::before { content: ""; position: absolute; left: 9px; top: 0; bottom: 0; border-left: 1px dotted #999; }
.top.end::before { bottom: 16px; }
.top:nth-child(2)::before { top: 12px; }
.top::after { content: ""; position: absolute; left: 9px; top: 12px; width: 10px; border-top: 1px dotted #999; }
.kid::before { content: ""; position: absolute; left: 28px; top: 0; bottom: 0; border-left: 1px dotted #999; }
.kid.last::before { bottom: 11px; }
.kid::after { content: ""; position: absolute; left: 29px; top: 11px; width: 10px; border-top: 1px dotted #999; }

/* view */
.view { flex: 1; display: flex; flex-direction: column; min-width: 0; }
.doc-tabs { height: 26px; border-bottom: 2px solid #55a0b9; background: #fff; flex: none; }
.doc-tab { width: 153px; height: 25px; background: #55a0b9; color: #fff; display: flex; align-items: center; padding-left: 6px; }
.doc-name { font-size: 16px; margin-left: 4px; line-height: 24px; }
.doc-ic { margin-left: 7px; }
.doc-x { margin-left: 6px; }
.canvas { flex: 1; background: linear-gradient(#b4b5b7, #e9eaec); position: relative; overflow: hidden; }
.scene { position: absolute; left: 0; top: 0; }
.ax { font: 12px "Liberation Sans", sans-serif; fill: #0808e0; text-anchor: middle; }
.axy { fill: #dcdcdc; text-anchor: start; font-size: 13px; }
.wm1 { font: bold 41px "Liberation Sans", "Noto Sans CJK SC", sans-serif; fill: #f0f1f3; }
.wm2 { font: bold 12px "Liberation Sans", sans-serif; fill: #f0f1f3; }
```
